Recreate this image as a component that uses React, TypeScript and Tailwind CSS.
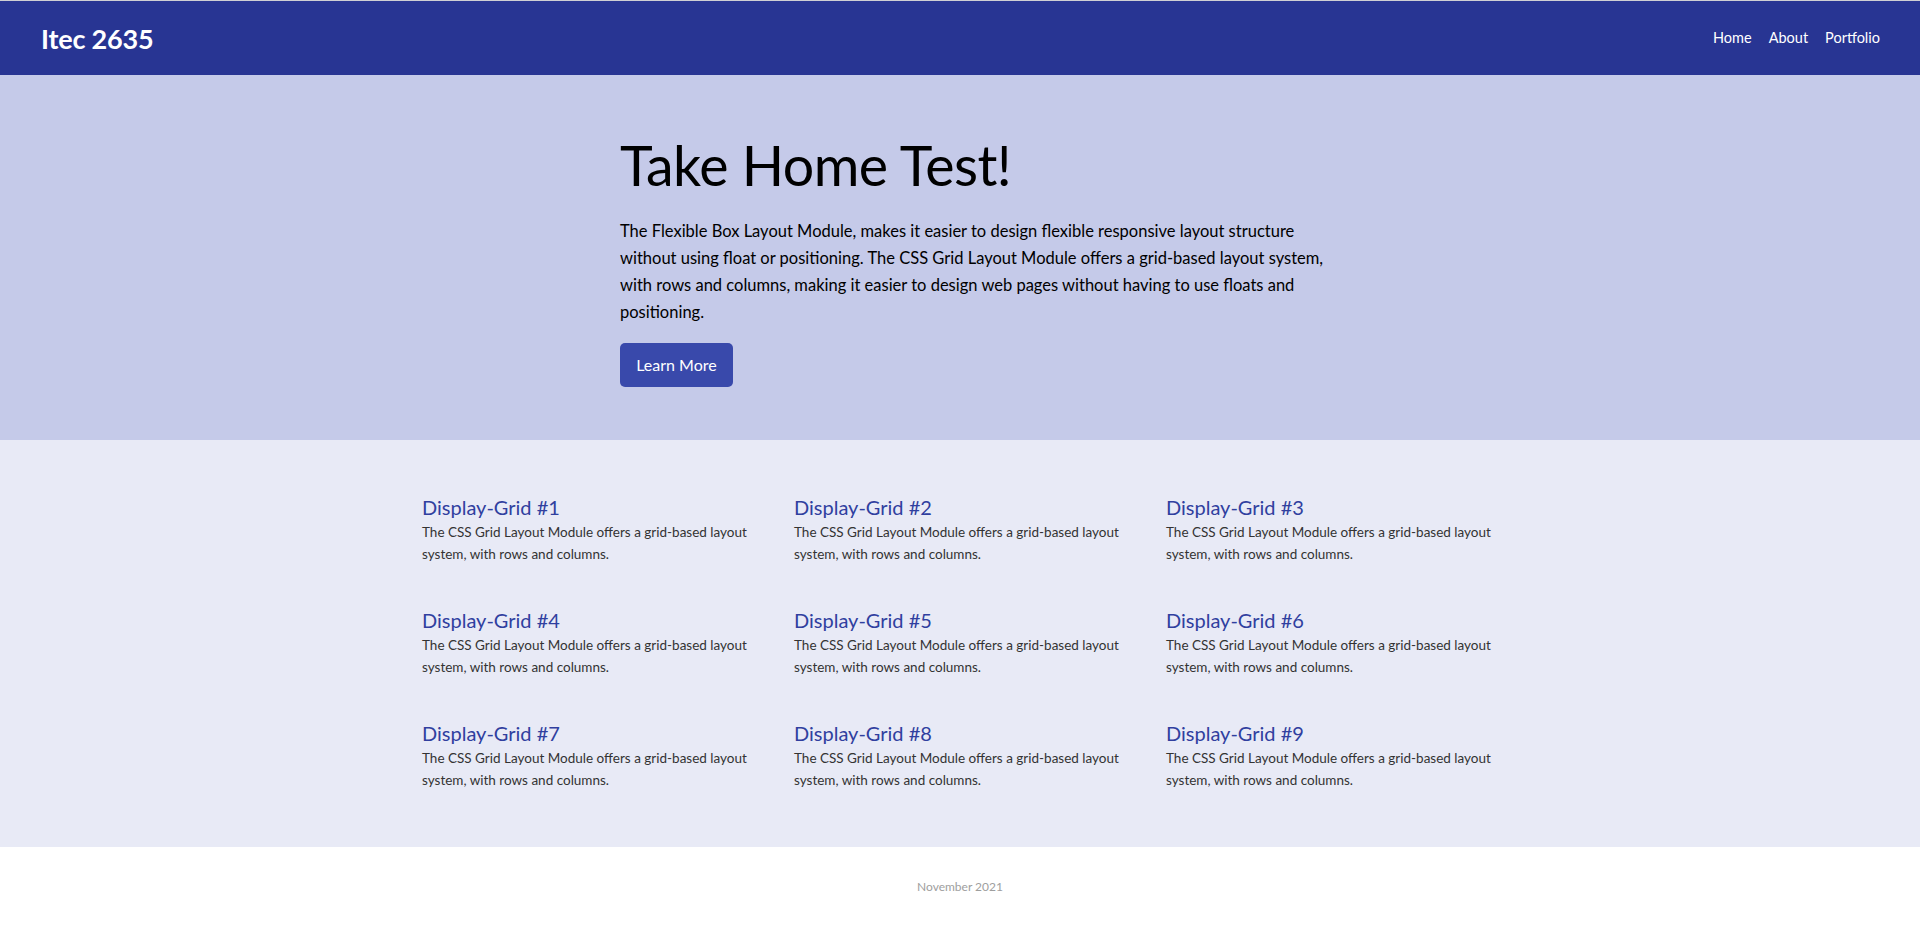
import React from 'react';

const navLinks = ['Home', 'About', 'Portfolio'];

const heroLines = [
  'The Flexible Box Layout Module, makes it easier to design flexible responsive layout structure',
  'without using float or positioning. The CSS Grid Layout Module offers a grid-based layout system,',
  'with rows and columns, making it easier to design web pages without having to use floats and',
  'positioning.',
];

const cards = Array.from({ length: 9 }, (_, i) => ({
  title: `Display-Grid #${i + 1}`,
  text: 'The CSS Grid Layout Module offers a grid-based layout system, with rows and columns.',
}));

export default function App() {
  return (
    <div className="min-h-[943px] flex flex-col bg-white font-['Lato',sans-serif] border-t border-[#cfcfd4]">
      {/* Header */}
      <header className="h-[74px] bg-[#283593] flex items-center justify-between pl-[41px] pr-[40px]">
        <a href="#" className="text-white font-bold text-[27px] leading-none tracking-[-0.2px]">
          Itec 2635
        </a>
        <nav className="flex items-center gap-[17px]">
          {navLinks.map((link) => (
            <a key={link} href="#" className="text-white text-[14.5px]">
              {link}
            </a>
          ))}
        </nav>
      </header>

      {/* Hero */}
      <section className="h-[365px] bg-[#c5cae9] flex justify-center">
        <div className="w-[680px] pt-[57px]">
          <h1 className="text-[55.5px] leading-[66px] font-normal text-black tracking-[-0.5px]">Take Home Test!</h1>
          <p className="mt-[20px] text-[16.5px] leading-[27px] text-black whitespace-nowrap">
            {heroLines.map((line, i) => (
              <React.Fragment key={i}>
                {line}
                {i < heroLines.length - 1 && <br />}
              </React.Fragment>
            ))}
          </p>
          <button className="mt-[17px] w-[113px] h-[44px] rounded-[5px] bg-[#3949ab] text-white text-[16px]">
            Learn More
          </button>
        </div>
      </section>

      {/* Grid */}
      <section className="h-[407px] bg-[#e8eaf6] flex justify-center pt-[54px]">
        <div className="w-[1076px] grid grid-cols-3 gap-x-[40px] gap-y-[42px] content-start">
          {cards.map((card) => (
            <div key={card.title}>
              <h2 className="text-[20px] leading-[27px] text-[#303f9f]">{card.title}</h2>
              <p className="text-[13.5px] leading-[22px] text-[#333333]">{card.text}</p>
            </div>
          ))}
        </div>
      </section>

      {/* Footer */}
      <footer className="flex-1 flex justify-center pt-[31px]">
        <p className="text-[12px] text-[#9e9e9e]">November 2021</p>
      </footer>
    </div>
  );
}
